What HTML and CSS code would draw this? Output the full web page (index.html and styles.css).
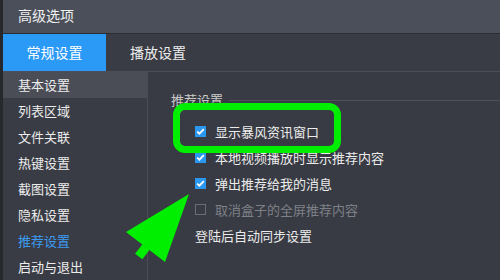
FILE: index.html
```html
<!DOCTYPE html>
<html lang="zh">
<head>
<meta charset="utf-8">
<title>高级选项</title>
<link rel="stylesheet" href="styles.css">
</head>
<body>
<div class="app">
  <div class="titlebar">高级选项</div>
  <div class="tabbar">
    <div class="tab active">常规设置</div>
    <div class="tab">播放设置</div>
  </div>
  <div class="main">
    <ul class="sidebar">
      <li class="item selected">基本设置</li>
      <li class="item">列表区域</li>
      <li class="item">文件关联</li>
      <li class="item">热键设置</li>
      <li class="item">截图设置</li>
      <li class="item">隐私设置</li>
      <li class="item current">推荐设置</li>
      <li class="item">启动与退出</li>
    </ul>
    <div class="content">
      <div class="section-head"><span class="section-title">推荐设置</span><span class="section-line"></span></div>
      <div class="rows">
        <div class="row"><span class="cb checked"></span><span class="label">显示暴风资讯窗口</span></div>
        <div class="row"><span class="cb checked"></span><span class="label">本地视频播放时显示推荐内容</span></div>
        <div class="row"><span class="cb checked"></span><span class="label">弹出推荐给我的消息</span></div>
        <div class="row disabled"><span class="cb"></span><span class="label">取消盒子的全屏推荐内容</span></div>
        <div class="row plain"><span class="label">登陆后自动同步设置</span></div>
      </div>
    </div>
  </div>
  <div class="highlight"></div>
  <svg class="arrow" width="500" height="280" viewBox="0 0 500 280">
    <polygon points="189,194 126,232 165,262" fill="#00ee00"/>
    <polygon points="142.4,244.3 149.6,249.7 142.3,259.2 135.1,253.8" fill="#00ee00"/>
  </svg>
</div>
</body>
</html>
```
FILE: styles.css
```css
* { box-sizing: border-box; }
html, body { margin: 0; padding: 0; }
body {
  width: 500px;
  height: 280px;
  overflow: hidden;
  background: #383b43;
  font-family: "Noto Sans CJK SC", "Noto Sans", sans-serif;
  color: #ececec;
}
.app {
  position: relative;
  width: 500px;
  height: 280px;
  display: flex;
  flex-direction: column;
  border-left: 3px solid #26282c;
}
.titlebar {
  height: 33px;
  flex: none;
  background: #4b4f59;
  padding-left: 15px;
  font-size: 14px;
  line-height: 31px;
  color: #f0f0f0;
}
.tabbar {
  height: 39px;
  flex: none;
  display: flex;
  background: #393c44;
  border-top: 1px solid #2a2c31;
  border-bottom: 1px solid #4c4f57;
}
.tab {
  font-size: 14px;
  line-height: 37px;
  color: #eeeeee;
  padding: 0 24px;
}
.tab.active {
  width: 103px;
  padding: 0;
  text-align: center;
  background: #2b9af6;
  color: #ffffff;
}
.main {
  flex: 1;
  display: flex;
  min-height: 0;
}
.sidebar {
  list-style: none;
  margin: 0;
  padding: 0;
  width: 145px;
  flex: none;
  background: #393c44;
  border-right: 1px solid #4a4d55;
}
.item {
  height: 26px;
  line-height: 26px;
  padding-left: 15px;
  font-size: 13px;
  color: #ececec;
}
.item.selected { background: #4a4d56; }
.item.current { color: #3b9bf2; }
.content {
  flex: 1;
  padding: 19px 0 0 23px;
  background: #383b43;
}
.section-head {
  display: flex;
  align-items: center;
  height: 18px;
}
.section-title {
  font-size: 13px;
  color: #c9c9c9;
  line-height: 18px;
}
.section-line {
  flex: 1;
  height: 1px;
  background: #4d5058;
  margin-left: 6px;
}
.rows {
  margin-top: 9px;
  padding-left: 24px;
  display: flex;
  flex-direction: column;
}
.row {
  height: 26px;
  display: flex;
  align-items: center;
  gap: 9px;
  font-size: 13px;
  color: #ececec;
}
.cb {
  width: 11px;
  height: 11px;
  flex: none;
  border: 1px solid #6a6d74;
  background: transparent;
}
.cb.checked {
  border-color: #2b98f0;
  background: #2b98f0 url("data:image/svg+xml,%3Csvg xmlns='http://www.w3.org/2000/svg' width='11' height='11' viewBox='0 0 11 11'%3E%3Cpath d='M2.2 5.6 L4.4 7.7 L8.8 3.2' fill='none' stroke='white' stroke-width='1.7'/%3E%3C/svg%3E") center/11px 11px no-repeat;
}
.row.disabled .label { color: #7d8087; }
.highlight {
  position: absolute;
  left: 170px;
  top: 103px;
  width: 168px;
  height: 50px;
  border: 7px solid #00ee00;
  border-radius: 12px;
}
.arrow {
  position: absolute;
  left: -3px;
  top: 0;
}
```
